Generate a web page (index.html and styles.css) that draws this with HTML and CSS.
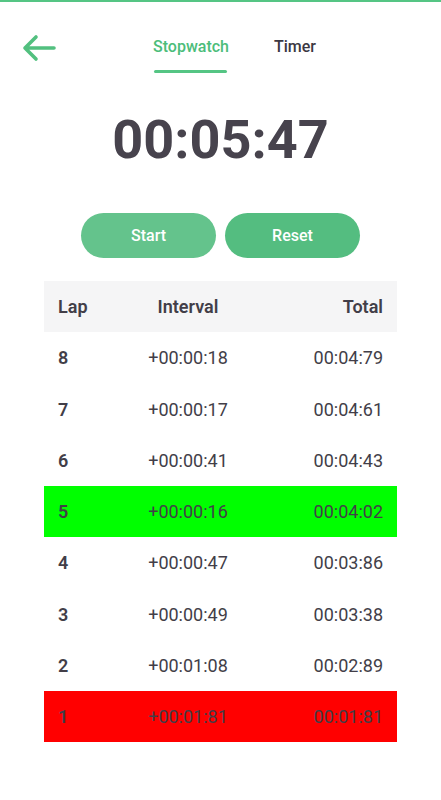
FILE: index.html
```html
<!DOCTYPE html>
<html>
<head>
<meta charset="utf-8">
<link rel="stylesheet" href="styles.css">
</head>
<body>
<div class="topline"></div>
<header class="header">
  <svg class="back" width="34" height="28" viewBox="0 0 34 28">
    <path d="M32 14H3M14 3L3 14L14 25" fill="none" stroke="#52c07f" stroke-width="3.6" stroke-linecap="round" stroke-linejoin="round"/>
  </svg>
  <nav class="tabs">
    <div class="tab active"><span>Stopwatch</span><i class="bar"></i></div>
    <div class="tab"><span>Timer</span></div>
  </nav>
</header>
<div class="clock">00:05:47</div>
<div class="buttons">
  <button class="btn start">Start</button>
  <button class="btn reset">Reset</button>
</div>
<div class="table">
  <div class="row head"><span>Lap</span><span class="mid">Interval</span><span class="end">Total</span></div>
  <div class="row"><b>8</b><span class="mid">+00:00:18</span><span class="end">00:04:79</span></div>
  <div class="row"><b>7</b><span class="mid">+00:00:17</span><span class="end">00:04:61</span></div>
  <div class="row"><b>6</b><span class="mid">+00:00:41</span><span class="end">00:04:43</span></div>
  <div class="row best"><b>5</b><span class="mid">+00:00:16</span><span class="end">00:04:02</span></div>
  <div class="row"><b>4</b><span class="mid">+00:00:47</span><span class="end">00:03:86</span></div>
  <div class="row"><b>3</b><span class="mid">+00:00:49</span><span class="end">00:03:38</span></div>
  <div class="row"><b>2</b><span class="mid">+00:01:08</span><span class="end">00:02:89</span></div>
  <div class="row worst"><b>1</b><span class="mid">+00:01:81</span><span class="end">00:01:81</span></div>
</div>
</body>
</html>
```
FILE: styles.css
```css
* { box-sizing: border-box; }
html, body { margin: 0; padding: 0; background: #fff; }
body {
  width: 441px;
  font-family: Roboto, "Liberation Sans", sans-serif;
  color: #423e48;
}
.topline { height: 2px; background: #55c584; }
.header {
  display: flex;
  align-items: flex-start;
  padding: 30px 0 0 22px;
}
.back { display: block; margin-top: 2px; }
.tabs {
  display: flex;
  gap: 45px;
  margin-left: 97px;
}
.tab {
  display: flex;
  flex-direction: column;
  align-items: center;
  font-size: 16px;
  font-weight: 500;
  line-height: 30px;
  color: #3b3842;
}
.tab.active { color: #4cbd7a; }
.bar {
  display: block;
  width: 73px;
  height: 3px;
  margin-top: 8px;
  border-radius: 2px;
  background: #55c584;
}
.clock {
  margin-top: 34px;
  text-align: center;
  font-size: 54px;
  font-weight: 700;
  line-height: 66px;
  color: #47434d;
}
.buttons {
  display: flex;
  justify-content: center;
  gap: 9px;
  margin-top: 40px;
}
.btn {
  width: 135px;
  height: 45px;
  border: none;
  border-radius: 23px;
  color: #fff;
  font-family: Roboto, "Liberation Sans", sans-serif;
  font-size: 16px;
  font-weight: 500;
}
.start { background: #64c38c; }
.reset { background: #54bd80; }
.table {
  margin: 23px 44px 0;
}
.row {
  display: grid;
  grid-template-columns: 60px 140px 1fr;
  align-items: center;
  height: 51.25px;
  padding: 0 14px;
  font-size: 18px;
}
.row b { font-weight: 600; }
.row .mid { text-align: center; }
.row .end { text-align: right; }
.head { background: #f5f5f6; font-weight: 600; }
.best { background: #00ff00; }
.worst { background: #ff0000; }
```
